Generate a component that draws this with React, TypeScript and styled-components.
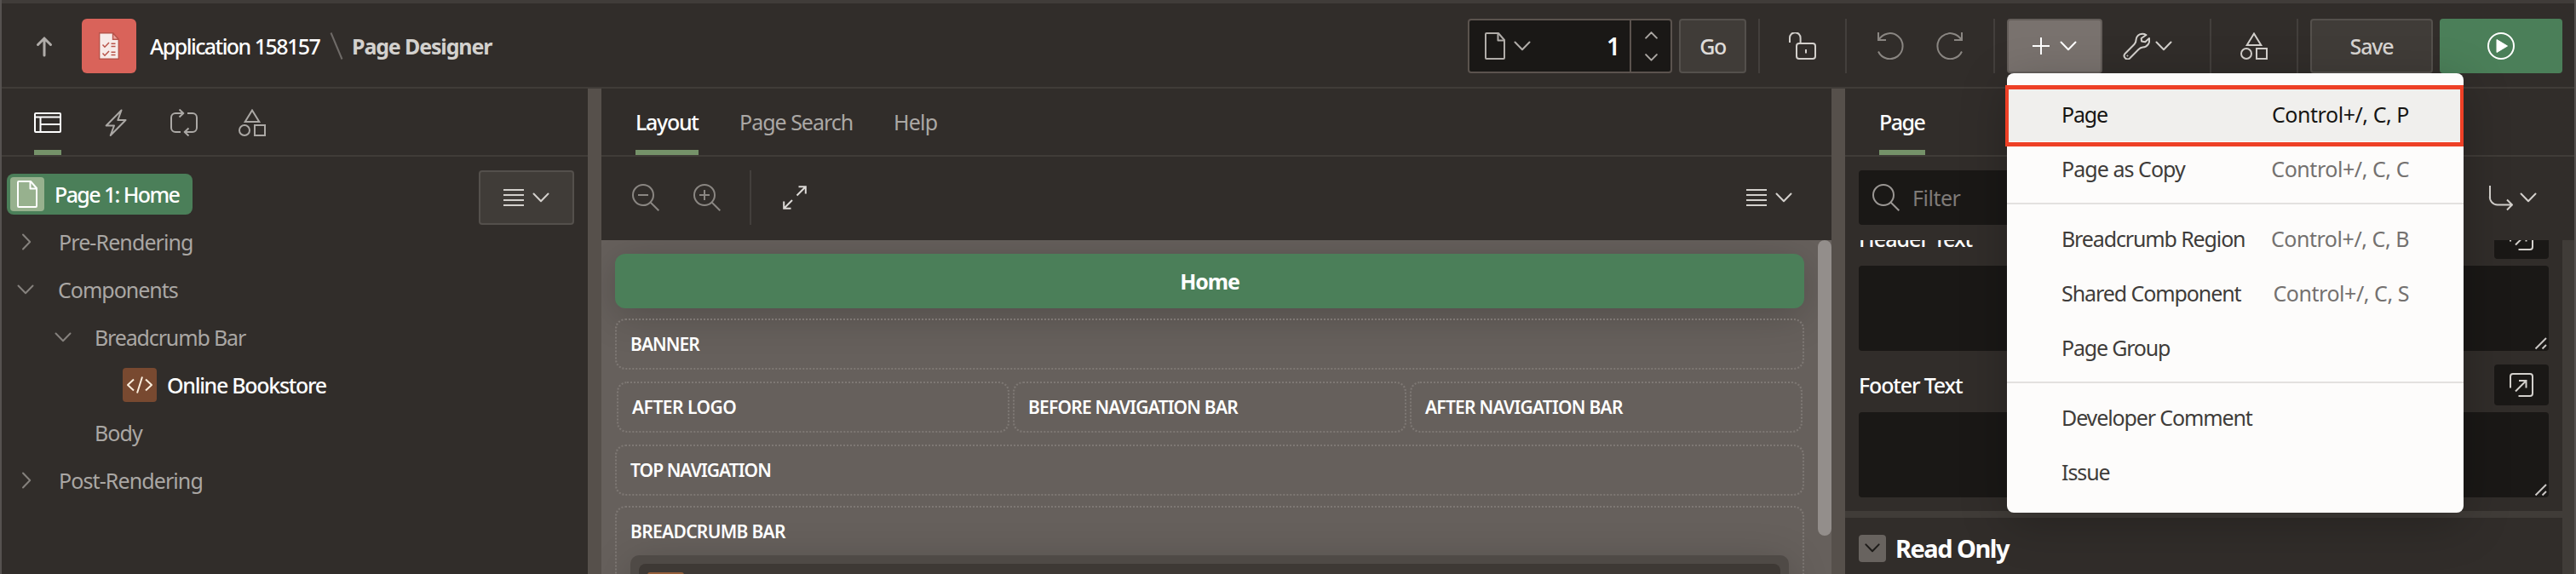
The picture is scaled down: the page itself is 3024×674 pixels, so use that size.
import React from 'react';
import styled, { createGlobalStyle } from 'styled-components';

const GlobalStyle = createGlobalStyle`
  * { box-sizing: border-box; }
  body { margin: 0; background: #312d2a; font-family: 'Noto Sans', 'Open Sans', sans-serif; font-size: 25px; color: #fff; }
  svg { display: block; flex: none; }
`;

/* ---------- text ---------- */

const Text = styled.span<{ $ls?: number; $size?: number; $weight?: number; $color?: string }>`
  font-size: ${p => p.$size ?? 25}px;
  font-weight: ${p => p.$weight ?? 400};
  letter-spacing: ${p => p.$ls ?? -1}px;
  color: ${p => p.$color ?? 'inherit'};
  white-space: nowrap;
  line-height: 1.36;
`;

/* ---------- icons ---------- */

type IconProps = { w?: number; h?: number; color?: string; stroke?: number; children: React.ReactNode };
const Icon = ({ w = 32, h = 32, color = '#d3d0cc', stroke = 2, children }: IconProps) => (
  <svg width={w} height={h} viewBox={`0 0 ${w} ${h}`} fill="none" stroke={color} strokeWidth={stroke} strokeLinejoin="round" strokeLinecap="butt">
    {children}
  </svg>
);

const ChevronDown = ({ color, w = 20 }: { color?: string; w?: number }) => (
  <svg width={w} height={w * 0.6} viewBox="0 0 20 12" fill="none" stroke={color ?? '#d3d0cc'} strokeWidth={40 / w} strokeLinecap="round" strokeLinejoin="round">
    <path d="M1.5 1.5 10 10.2l8.5-8.7" />
  </svg>
);
const ChevronUp = ({ color, w = 20 }: { color?: string; w?: number }) => (
  <svg width={w} height={w * 0.6} viewBox="0 0 20 12" fill="none" stroke={color ?? '#d3d0cc'} strokeWidth={40 / w} strokeLinecap="round" strokeLinejoin="round">
    <path d="M1.5 10.2 10 1.5l8.5 8.7" />
  </svg>
);
const ChevronRight = ({ color }: { color?: string }) => (
  <Icon w={12} h={20} color={color}><path d="M2 1.5 10.2 10 2 18.5" strokeLinecap="round" /></Icon>
);
const Lines = () => (
  <Icon w={24} h={20}><path d="M0 1h24M0 7h24M0 13h24M0 19h24" /></Icon>
);
const DocIcon = ({ color }: { color?: string }) => (
  <Icon w={24} color={color}><path d="M2 1h14l7 8v21a1 1 0 0 1-1 1H2a1 1 0 0 1-1-1V2a1 1 0 0 1 1-1Z" /><path d="M15.5 1v8.5H23" /></Icon>
);
const ShapesIcon = ({ color }: { color?: string }) => (
  <Icon color={color}>
    <path d="M16 1.5 24.3 15H7.7Z" strokeLinejoin="miter" /><circle cx="7" cy="25" r="6" /><path d="M19 19h12v12H19Z" strokeLinejoin="miter" />
  </Icon>
);
const Magnifier = ({ kind, color }: { kind?: 'in' | 'out'; color: string }) => (
  <Icon color={color}>
    <circle cx="13" cy="13" r="12" /><path d="m21.5 21.5 9.8 9.8" />
    {kind && <path d="M7 13h12" />}
    {kind === 'in' && <path d="M13 7v12" />}
  </Icon>
);
const OpenIcon = () => (
  <Icon w={28} h={28}>
    <path d="M1 17.5V4a3 3 0 0 1 3-3h20a3 3 0 0 1 3 3v20a3 3 0 0 1-3 3H10.5" /><path d="M7 21.5 19.5 9M11 9h8.5v8.5" strokeLinejoin="miter" />
  </Icon>
);

/* ---------- frame ---------- */

const Window = styled.div`
  position: relative;
  width: 3024px;
  height: 674px;
  overflow: hidden;
  display: flex;
  flex-direction: column;
  background: #312d2a;
  border: solid #565250;
  border-width: 0 2px;
`;
const TopStrip = styled.div`height: 4px; flex: none; background: #403c39;`;
const Header = styled.header`
  display: flex;
  flex: none;
  align-items: center;
  height: 100px;
  padding: 18px 14px 16px 34px;
  border-bottom: 2px solid #403c38;
`;
const AppBadge = styled.div`
  display: flex;
  align-items: center;
  justify-content: center;
  width: 64px;
  height: 64px;
  margin: 0 16px 0 28px;
  border-radius: 6px;
  background: #d9635a;
`;
const Crumb = styled.div<{ $w: number }>`display: flex; width: ${p => p.$w}px;`;
const Spacer = styled.div`flex: 1;`;

const PageInput = styled.div`
  display: flex;
  width: 240px;
  height: 64px;
  border: 2px solid #5b534e;
  border-radius: 4px;
  background: #1a1816;
`;
const PagePicker = styled.div`
  display: flex;
  flex: 1;
  align-items: center;
  gap: 10px;
  padding: 0 12px 0 18px;
  border-right: 2px solid #5b534e;
`;
const Spinner = styled.div`
  display: flex;
  flex-direction: column;
  align-items: center;
  justify-content: space-between;
  width: 46px;
  padding: 13px 0 12px;
`;
const Button = styled.div<{ $w: number; $ml?: number; $bg?: string; $line?: string; $gap?: number }>`
  display: flex;
  flex: none;
  align-items: center;
  justify-content: center;
  gap: ${p => p.$gap ?? 12}px;
  width: ${p => p.$w}px;
  height: 64px;
  margin-left: ${p => p.$ml ?? 0}px;
  border-radius: 4px;
  border: 2px solid ${p => p.$line ?? '#54504c'};
  background: ${p => p.$bg ?? '#403c38'};
`;
const Ghost = styled(Button)`border-color: transparent; background: none;`;
const ToolsButton = styled(Ghost)`justify-content: flex-start; padding-left: 22px;`;
const Divider = styled.div<{ $ml?: number; $mr?: number }>`
  width: 2px;
  height: 64px;
  margin-left: ${p => p.$ml ?? 0}px;
  margin-right: ${p => p.$mr ?? 0}px;
  background: #433f3c;
`;

/* ---------- panels ---------- */

const Workspace = styled.main`display: flex; flex: 1; min-height: 0;`;
const Panel = styled.section<{ $w: number }>`
  display: flex;
  flex-direction: column;
  width: ${p => p.$w}px;
  min-height: 0;
`;
const Splitter = styled.div`width: 16px; background: #56504b;`;
const Tabs = styled.nav<{ $pl: number }>`
  display: flex;
  flex: none;
  gap: 48px;
  height: 80px;
  padding-left: ${p => p.$pl}px;
  border-bottom: 2px solid #403c38;
`;
const Tab = styled.div<{ $w: number; $active?: boolean }>`
  display: flex;
  align-items: center;
  width: ${p => p.$w}px;
  color: ${p => (p.$active ? '#fff' : '#aba8a5')};
  box-shadow: ${p => (p.$active ? 'inset 0 -6px #759269' : 'none')};
`;
const IconTab = styled(Tab)`padding-top: 2px;`;

const TreeArea = styled.div`display: flex; align-items: flex-start; padding: 16px 16px 0 0;`;
const Tree = styled.div`flex: 1;`;
const TreeRow = styled.div<{ $pl: number }>`
  display: flex;
  align-items: center;
  height: 56px;
  padding-left: ${p => p.$pl}px;
  color: #aaa7a4;
`;
const Toggle = styled.div`display: flex; width: 44px; flex: none;`;
const RootNode = styled.div`
  display: flex;
  align-items: center;
  gap: 12px;
  width: 218px;
  height: 48px;
  padding-left: 4px;
  border-radius: 8px;
  background: #4b7f59;
`;
const NodeIcon = styled.div<{ $bg: string }>`
  display: flex;
  align-items: center;
  justify-content: center;
  width: 40px;
  height: 40px;
  border-radius: 4px;
  background: ${p => p.$bg};
`;
const Leaf = styled.div`display: flex; align-items: center; gap: 12px; color: #fff;`;

const Toolbar = styled.div`
  display: flex;
  flex: none;
  align-items: center;
  height: 98px;
  padding: 0 28px 2px 36px;
`;
const ToolGap = styled.div<{ $w: number }>`width: ${p => p.$w}px;`;
const Canvas = styled.div`
  display: flex;
  flex: 1;
  min-height: 0;
  overflow: hidden;
  background: #66605c;
`;
const Stage = styled.div`flex: 1; padding: 16px;`;
const ScrollThumb = styled.div`width: 16px; height: 347px; border-radius: 8px; background: #938e8b;`;
const PageBar = styled.div`
  display: flex;
  align-items: center;
  justify-content: center;
  height: 64px;
  margin-bottom: 12px;
  border-radius: 12px;
  background: #4b7f59;
  box-shadow: 0 8px 48px rgba(0, 0, 0, 0.2);
`;
const Slot = styled.div<{ $mb?: number }>`
  position: relative;
  height: 60px;
  margin-bottom: ${p => p.$mb ?? 14}px;
  padding-left: 16px;
  border: 2px dotted #7e7874;
  border-radius: 12px;
  display: flex;
  align-items: center;
`;
const SlotRow = styled.div`
  display: grid;
  grid-template-columns: 461px 462px 461px;
  justify-content: space-between;
  padding: 0 2px;
`;
const TallSlot = styled.div`
  height: 200px;
  padding: 0 16px;
  border: 2px dotted #7e7874;
  border-radius: 12px;
`;
const SlotTitle = styled.div`display: flex; align-items: center; height: 56px;`;
const RegionFrame = styled.div`
  height: 120px;
  padding: 10px;
  border-radius: 10px;
  background: #4f4a46;
  box-shadow: 0 8px 48px rgba(0, 0, 0, 0.2);
`;
const RegionCard = styled.div`height: 100px; padding: 10px; border-radius: 8px; background: #3e3935;`;
const RegionChip = styled.div`width: 43px; height: 40px; border-radius: 3px; background: #96603a;`;

/* ---------- properties ---------- */

const FilterBar = styled.div`
  display: flex;
  flex: none;
  align-items: center;
  justify-content: space-between;
  height: 98px;
  padding: 0 44px 2px 16px;
`;
const FilterInput = styled.div`
  display: flex;
  align-items: center;
  gap: 15px;
  width: 700px;
  height: 64px;
  padding-left: 16px;
  border-radius: 4px;
  background: #1a1816;
`;
const Follow = styled.div`display: flex; align-items: center; gap: 6px;`;
const FormScroll = styled.div`display: flex; flex: 1; min-height: 0; overflow: hidden;`;
const Form = styled.div`flex: 1; margin-top: -26px;`;
const Track = styled.div`width: 14px; background: #403c38;`;
const Field = styled.div`padding: 0 16px 16px;`;
const FieldHead = styled.div`display: flex; align-items: center; justify-content: space-between; height: 48px; margin-bottom: 8px;`;
const OpenButton = styled.div`
  display: flex;
  align-items: center;
  justify-content: center;
  width: 64px;
  height: 48px;
  border-radius: 4px;
  background: #1a1816;
`;
const TextArea = styled.div`
  display: flex;
  align-items: flex-end;
  justify-content: flex-end;
  height: 100px;
  padding: 1px;
  border-radius: 4px;
  background: #1a1816;
`;
const Band = styled.div`height: 8px; background: #403c38;`;
const GroupHead = styled.div`display: flex; align-items: center; gap: 11px; padding: 16px 16px 0;`;
const Collapse = styled.div`
  display: flex;
  align-items: center;
  justify-content: center;
  width: 32px;
  height: 32px;
  border-radius: 4px;
  background: #68635f;
`;

/* ---------- create menu ---------- */

const Menu = styled.div`
  position: absolute;
  left: 2354px;
  top: 86px;
  width: 536px;
  height: 516px;
  padding: 16px 0;
  border-radius: 8px;
  background: #fdfcfb;
  box-shadow: 0 12px 56px rgba(0, 0, 0, 0.24);
`;
const MenuItem = styled.div<{ $current?: boolean }>`
  display: flex;
  align-items: center;
  justify-content: space-between;
  height: 64px;
  padding: 0 64px;
  color: ${p => (p.$current ? '#161513' : '#3f3c3a')};
  background: ${p => (p.$current ? '#f0efed' : 'none')};
`;
const MenuRule = styled.div`height: 2px; margin: 8px 0; background: #e3e1df;`;
const Highlight = styled.div`
  position: absolute;
  left: -2px;
  top: 14px;
  width: 538px;
  height: 72px;
  border: 5px solid #ee4026;
  border-width: 5px 4px;
`;

const menu: ({ label: string; ls: number; keys?: string } | null)[] = [
  { label: 'Page', ls: -1.2, keys: 'Control+/, C, P' },
  { label: 'Page as Copy', ls: -0.95, keys: 'Control+/, C, C' },
  null,
  { label: 'Breadcrumb Region', ls: -1.13, keys: 'Control+/, C, B' },
  { label: 'Shared Component', ls: -1.08, keys: 'Control+/, C, S' },
  { label: 'Page Group', ls: -1.2 },
  null,
  { label: 'Developer Comment', ls: -1.12 },
  { label: 'Issue', ls: -1.1 },
];

const dim = '#8a8682';

const Grip = () => (
  <Icon w={16} h={16} color="#c9c6c3"><path d="M1.5 14.5 14 2M9.5 14.5 14 10" /></Icon>
);

const TextField = ({ label, ls }: { label: string; ls: number }) => (
  <Field>
    <FieldHead>
      <Text $weight={500} $ls={ls}>{label}</Text>
      <OpenButton><OpenIcon /></OpenButton>
    </FieldHead>
    <TextArea><Grip /></TextArea>
  </Field>
);

const SlotLabel = ({ children, ls }: { children: string; ls: number }) => (
  <Text $size={21} $weight={600} $ls={ls}>{children}</Text>
);

export default function App() {
  return (
    <>
      <GlobalStyle />
      <Window>
        <TopStrip />
        <Header>
          <Icon color="#b0aca9" stroke={3}><path d="M16 27V8M8.5 14.5 16 7l7.5 7.5" strokeLinejoin="miter" strokeLinecap="round" /></Icon>
          <AppBadge>
            <svg width="24" height="32" viewBox="0 0 24 32" fill="none" stroke="#b8544b" strokeWidth="1.4">
              <path d="M.7.7h15.8l6.8 7.6v23H.7Z" fill="#f7ebe9" />
              <path d="M16.5.7v7.6h6.8Z" fill="#eca39c" />
              <path d="m4.5 14.5 2.5 2.7 5-5.2M14.5 13.2h5M14.5 16.4h5M4.5 24.5l2.5 2.7 5-5.2M14.5 23.2h5M14.5 26.4h5" strokeWidth="1.5" />
            </svg>
          </AppBadge>
          <Crumb $w={211}><Text $weight={500} $ls={-1.55}>Application 158157</Text></Crumb>
          <Icon w={16} color="#6f6b68"><path d="M1.5 0.5 14.5 31.5" /></Icon>
          <ToolGap $w={10} />
          <Text $weight={700} $ls={-1.15} $color="#d3d1ce">Page Designer</Text>
          <Spacer />
          <PageInput>
            <PagePicker>
              <DocIcon color="#b0aca8" />
              <ChevronDown color="#b0aca8" />
              <Spacer />
              <Text $weight={600} $size={28}>1</Text>
            </PagePicker>
            <Spinner>
              <ChevronUp color="#aaa6a2" w={15} />
              <ChevronDown color="#aaa6a2" w={15} />
            </Spinner>
          </PageInput>
          <Button $w={79} $ml={8}><Text $weight={500} $ls={-1.5} $color="#dedbd8">Go</Text></Button>
          <Divider $ml={14} />
          <Ghost $w={100}>
            <Icon><path d="M1 12V6.5a6 6 0 0 1 12.6 0V13" /><rect x="9" y="13" width="22" height="18" rx="3" /><path d="M20 20v4.5" /></Icon>
          </Ghost>
          <Divider />
          <Ghost $w={172} $gap={38}>
            <Icon color={dim}><path d="M2 0v9h9" strokeLinejoin="miter" /><path d="M2.4 9A15 15 0 1 1 2 22.5" /></Icon>
            <Icon color={dim}><path d="M30 0v9h-9" strokeLinejoin="miter" /><path d="M29.6 9A15 15 0 1 0 30 22.5" /></Icon>
          </Ghost>
          <Divider $mr={14} />
          <Button $w={112} $bg="#79726e" $line="#645e5a">
            <Icon w={20} h={20} color="#fff"><path d="M10 0v20M0 10h20" /></Icon>
            <ChevronDown color="#fff" />
          </Button>
          <ToolsButton $w={126} $gap={6}>
            <Icon>
              <path d="M27.5 3C22.5 0 16 2.500 15.500 9c0 2.500-.5 3.500-2 5L2.600 25a3.900 3.900 0 0 0 5.500 5.500L18.500 20c1.500-1.500 3-2.300 5-2.500C29 17 32 12.500 31 7l-4.700 4.300-4.300-.8-.3-3.500Z" />
              <circle cx="5.400" cy="27.500" r=".6" strokeWidth="1" />
            </Icon>
            <ChevronDown />
          </ToolsButton>
          <Divider />
          <Ghost $w={100}><ShapesIcon /></Ghost>
          <Divider $mr={14} />
          <Button $w={144}><Text $weight={500} $ls={-1.2} $color="#d8d5d2">Save</Text></Button>
          <Button $w={144} $ml={8} $bg="#4b7f59" $line="#4b7f59">
            <Icon color="#fff"><circle cx="16" cy="16" r="15" /><path d="M11 8.500v15l12.500-7.500Z" fill="#fff" strokeLinejoin="miter" strokeWidth="1" /></Icon>
          </Button>
        </Header>

        <Workspace>
          <Panel $w={688}>
            <Tabs $pl={38}>
              <IconTab $w={32} $active>
                <Icon color="#fff"><rect x="1" y="5" width="30" height="22" rx="1" /><path d="M1 9.500h30M7.500 9.500V27M7.500 18H31" /></Icon>
              </IconTab>
              <IconTab $w={32}>
                <Icon color="#aba8a5"><path d="M22.500 1.500 4.700 19.500H14L9.700 31 27.500 13H18.300Z" /></Icon>
              </IconTab>
              <IconTab $w={32}>
                <Icon color="#aba8a5">
                  <path d="M12 27H6a5 5 0 0 1-5-5V10a5 5 0 0 1 5-5h9.500M10.500.5 15.300 5l-4.800 4.500M20 5h6a5 5 0 0 1 5 5v12a5 5 0 0 1-5 5h-9.500M21.500 22.500 16.700 27l4.800 4.500" />
                </Icon>
              </IconTab>
              <IconTab $w={32}><ShapesIcon color="#aba8a5" /></IconTab>
            </Tabs>
            <TreeArea>
              <Tree>
                <TreeRow $pl={6}>
                  <RootNode>
                    <NodeIcon $bg="#97b18e"><DocIcon color="#fff" /></NodeIcon>
                    <Text $weight={500} $ls={-1.6} $color="#fff">Page 1: Home</Text>
                  </RootNode>
                </TreeRow>
                <TreeRow $pl={23}><Toggle><ChevronRight color="#85817d" /></Toggle><Text $ls={-0.9}>Pre-Rendering</Text></TreeRow>
                <TreeRow $pl={18}><Toggle><ChevronDown color="#85817d" /></Toggle><ToolGap $w={4} /><Text $ls={-1}>Components</Text></TreeRow>
                <TreeRow $pl={62}><Toggle><ChevronDown color="#85817d" /></Toggle><ToolGap $w={3} /><Text $ls={-1.15}>Breadcrumb Bar</Text></TreeRow>
                <TreeRow $pl={142}>
                  <Leaf>
                    <NodeIcon $bg="#784930">
                      <Icon color="#fbeedd"><path d="M9 9.500 2 16l7 6.500M23 9.500 30 16l-7 6.500M19 6.500l-6 19" /></Icon>
                    </NodeIcon>
                    <Text $weight={500} $ls={-1.3}>Online Bookstore</Text>
                  </Leaf>
                </TreeRow>
                <TreeRow $pl={109}><Text $ls={-0.9}>Body</Text></TreeRow>
                <TreeRow $pl={23}><Toggle><ChevronRight color="#85817d" /></Toggle><Text $ls={-0.9}>Post-Rendering</Text></TreeRow>
              </Tree>
              <Button $w={112} $gap={10}><Lines /><ChevronDown /></Button>
            </TreeArea>
          </Panel>
          <Splitter />

          <Panel $w={1444}>
            <Tabs $pl={40}>
              <Tab $w={74} $active><Text $weight={500} $ls={-1.3}>Layout</Text></Tab>
              <Tab $w={133}><Text $ls={-1}>Page Search</Text></Tab>
              <Tab $w={52}><Text $ls={-0.8}>Help</Text></Tab>
            </Tabs>
            <Toolbar>
              <Magnifier kind="out" color={dim} />
              <ToolGap $w={40} />
              <Magnifier kind="in" color={dim} />
              <Divider $ml={34} $mr={37} />
              <Icon w={28} h={28} color="#dcd9d6"><path d="M16.500 11.500 26.500 1.500M18.500 1.200h8.300v8.300M11 17 1.500 26.500M1.200 18.500v8.300h8.300" strokeLinejoin="miter" /></Icon>
              <Spacer />
              <Lines />
              <ToolGap $w={10} />
              <ChevronDown />
              <ToolGap $w={18} />
            </Toolbar>
            <Canvas>
              <Stage>
                <PageBar><Text $weight={700} $ls={-1.1}>Home</Text></PageBar>
                <Slot><SlotLabel ls={-0.95}>BANNER</SlotLabel></Slot>
                <SlotRow>
                  <Slot><SlotLabel ls={-0.5}>AFTER LOGO</SlotLabel></Slot>
                  <Slot><SlotLabel ls={-0.8}>BEFORE NAVIGATION BAR</SlotLabel></Slot>
                  <Slot><SlotLabel ls={-0.75}>AFTER NAVIGATION BAR</SlotLabel></Slot>
                </SlotRow>
                <Slot $mb={12}><SlotLabel ls={-0.95}>TOP NAVIGATION</SlotLabel></Slot>
                <TallSlot>
                  <SlotTitle><SlotLabel ls={-0.68}>BREADCRUMB BAR</SlotLabel></SlotTitle>
                  <RegionFrame><RegionCard><RegionChip /></RegionCard></RegionFrame>
                </TallSlot>
              </Stage>
              <ScrollThumb />
            </Canvas>
          </Panel>
          <Splitter />

          <Panel $w={856}>
            <Tabs $pl={40}><Tab $w={54} $active><Text $weight={500} $ls={-1.5}>Page</Text></Tab></Tabs>
            <FilterBar>
              <FilterInput>
                <Magnifier color="#9b9794" />
                <Text $ls={-0.5} $color="#7f7b78">Filter</Text>
              </FilterInput>
              <Follow>
                <Icon><path d="M3 2v12a9 9 0 0 0 9 10.500h17M23 18.500l6 6-6 6" /></Icon>
                <ChevronDown />
              </Follow>
            </FilterBar>
            <FormScroll>
              <Form>
                <TextField label="Header Text" ls={-0.95} />
                <TextField label="Footer Text" ls={-1.15} />
                <Band />
                <GroupHead>
                  <Collapse><ChevronDown color="#1d1b19" w={18} /></Collapse>
                  <Text $size={29} $weight={700} $ls={-1.5}>Read Only</Text>
                </GroupHead>
              </Form>
              <Track />
            </FormScroll>
          </Panel>
        </Workspace>

        <Menu>
          {menu.map((item, i) =>
            item ? (
              <MenuItem key={i} $current={i === 0}>
                <Text $ls={item.ls}>{item.label}</Text>
                {item.keys && <Text $ls={-0.45} $color={i === 0 ? '#161513' : '#74716f'}>{item.keys}</Text>}
              </MenuItem>
            ) : (
              <MenuRule key={i} />
            ),
          )}
          <Highlight />
        </Menu>
      </Window>
    </>
  );
}
